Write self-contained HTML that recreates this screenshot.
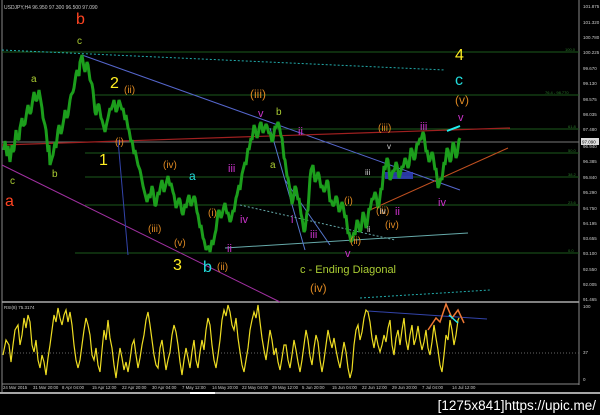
<!DOCTYPE html>
<html><head><meta charset="utf-8"><style>
html,body{margin:0;padding:0;background:#000;width:600px;height:415px;overflow:hidden}
svg{display:block}
text{font-family:"Liberation Sans",sans-serif}
</style></head><body>
<svg width="600" height="415" viewBox="0 0 600 415" xmlns="http://www.w3.org/2000/svg">
<rect width="600" height="415" fill="#000"/>
<line x1="2" y1="0" x2="2" y2="392" stroke="#888" stroke-width="1"/>
<line x1="579" y1="0" x2="579" y2="385" stroke="#888" stroke-width="1"/>
<line x1="2" y1="302" x2="579" y2="302" stroke="#aaa" stroke-width="1.5"/>
<line x1="2" y1="384" x2="579" y2="384" stroke="#888"/>
<line x1="0" y1="393" x2="600" y2="393" stroke="#ddd" stroke-width="1.5"/>
<g stroke="#1d5a1d" stroke-width="1">
<line x1="2" y1="52" x2="579" y2="52"/>
<line x1="95" y1="95" x2="579" y2="95"/>
<line x1="85" y1="129" x2="579" y2="129"/>
<line x1="85" y1="153" x2="579" y2="153"/>
<line x1="85" y1="177" x2="579" y2="177"/>
<line x1="85" y1="205" x2="579" y2="205"/>
<line x1="75" y1="253" x2="579" y2="253"/>
</g>
<line x1="2" y1="142" x2="579" y2="142" stroke="#777"/>
<g fill="#2a7a2a" font-size="4"><text x="565" y="51">100.0</text><text x="545" y="94">76.4 - 98.770</text><text x="568" y="128">61.8</text><text x="568" y="152">50.0</text><text x="568" y="176">38.2</text><text x="568" y="204">23.6</text><text x="568" y="252">0.0</text></g>
<line x1="2" y1="50" x2="445" y2="70" stroke="#2aa" stroke-dasharray="2,2"/>
<line x1="82" y1="55" x2="460" y2="190" stroke="#5566cc"/>
<line x1="2" y1="165" x2="280" y2="302" stroke="#a030a0"/>
<line x1="2" y1="145" x2="510" y2="128" stroke="#a02020" stroke-width="1.2"/>
<line x1="370" y1="210" x2="508" y2="148" stroke="#c05020"/>
<line x1="225" y1="248" x2="468" y2="233" stroke="#6aa"/>
<line x1="270" y1="128" x2="305" y2="250" stroke="#5577cc"/>
<line x1="285" y1="180" x2="330" y2="245" stroke="#5577cc"/>
<line x1="240" y1="205" x2="395" y2="240" stroke="#6aa" stroke-dasharray="2,2"/>
<line x1="360" y1="298" x2="490" y2="290" stroke="#2aa" stroke-dasharray="2,2"/>
<line x1="118" y1="140" x2="128" y2="255" stroke="#3344aa"/>
<rect x="385" y="172" width="28" height="7" fill="#3344cc" opacity="0.8"/>
<polyline fill="none" stroke="#1c9e1c" stroke-width="3" stroke-linejoin="bevel" points="
4,150 5,141 7,156 8,146 10,162 12,145 13,152 14,150 16,130 17,138 19,140 20,128 22,118 23,126 25,124 27,110 28,105 30,114 31,112 33,98 34,92 36,101 37,100 39,90 40,96 42,108 43,118 45,125 46,130 48,152 49,145 50,165 52,158 53,155 55,142 56,148 58,130 59,125 61,134 62,130 64,118 65,110 67,118 68,115 70,100 71,95 73,92 74,88 76,74 77,70 79,76 80,62 82,55 84,68 85,72 87,62 88,65 90,80 92,84 93,90 95,112 96,115 98,104 99,105 101,118 102,120 104,128 105,132 107,122 108,118 110,108 111,110 113,104 114,100 116,112 117,110 119,100 120,103 122,110 123,108 125,120 126,115 128,128 129,130 131,142 132,140 134,154 135,150 137,160 138,165 140,170 141,175 143,186 144,190 146,198 147,202 149,194 150,198 152,186 153,190 155,206 156,205 158,192 159,195 161,184 162,180 164,192 165,188 167,180 168,176 170,186 171,183 173,192 174,195 176,208 177,205 179,198 180,200 182,213 183,215 185,204 186,208 188,198 189,195 191,206 192,203 194,196 195,198 197,212 198,215 200,228 201,225 203,238 204,240 206,250 207,248 209,246 210,252 212,240 213,245 215,234 216,230 218,212 219,210 221,218 222,215 224,206 225,203 227,214 228,212 230,222 231,220 233,210 234,212 236,198 237,195 239,185 240,190 242,174 243,170 245,162 246,165 248,148 249,150 251,138 252,140 254,125 255,128 257,138 258,135 260,124 261,122 263,133 264,130 266,124 267,126 269,134 270,132 272,142 273,140 275,126 276,128 278,122 279,125 281,136 282,138 284,158 285,160 287,176 288,178 290,190 292,204 293,200 295,186 296,188 298,200 299,198 301,214 302,218 304,232 305,230 307,212 308,210 310,178 311,170 313,165 315,182 316,180 318,172 319,175 321,188 322,185 324,192 325,190 327,180 328,182 330,202 331,200 333,206 334,205 336,196 337,198 339,212 340,210 342,202 343,205 345,218 346,215 348,234 349,232 351,242 352,240 354,232 355,235 357,220 358,222 360,232 361,230 363,212 364,215 366,228 367,225 369,208 370,210 372,198 373,200 375,192 376,195 378,208 379,205 381,188 382,190 384,166 385,170 387,158 388,160 390,180 391,178 393,170 394,172 396,162 397,165 399,178 400,175 402,166 403,168 405,158 406,160 408,168 409,165 411,148 412,150 414,160 415,158 417,143 418,145 420,138 421,140 423,132 424,135 426,152 427,150 429,162 430,160 432,152 433,155 435,170 436,168 438,188 439,185 441,178 442,180 444,162 445,165 447,148 448,150 450,162 451,160 453,142 454,145 456,158 457,155 459,140 460,138"/>
<line x1="447" y1="131" x2="460" y2="126" stroke="#2ee" stroke-width="2"/>
<g font-size="16">
<text x="76" y="24" fill="#ff4422">b</text>
<text x="5" y="206" fill="#ff4422">a</text>
<text x="110" y="88" fill="#ffee22">2</text>
<text x="99" y="165" fill="#ffee22">1</text>
<text x="173" y="270" fill="#ffee22">3</text>
<text x="455" y="60" fill="#ffee22">4</text>
<text x="455" y="85" fill="#22dddd">c</text>
<text x="203" y="272" fill="#22dddd">b</text>
<text x="189" y="180" fill="#22dddd" font-size="12">a</text>
</g>
<g font-size="10" fill="#aacc33">
<text x="77" y="44">c</text><text x="31" y="82">a</text><text x="52" y="177">b</text><text x="10" y="184">c</text>
<text x="276" y="115">b</text><text x="270" y="168">a</text>
<text x="300" y="273" font-size="11">c - Ending Diagonal</text>
</g>
<g font-size="10" fill="#dd8822">
<text x="124" y="93">(ii)</text><text x="115" y="145">(i)</text><text x="163" y="168">(iv)</text>
<text x="148" y="232">(iii)</text><text x="174" y="246">(v)</text><text x="208" y="216">(i)</text><text x="217" y="270">(ii)</text>
<text x="250" y="98" font-size="12">(iii)</text><text x="378" y="131">(iii)</text><text x="376" y="214">(iii)</text>
<text x="385" y="228">(iv)</text><text x="344" y="204">(i)</text><text x="350" y="244">(ii)</text>
<text x="310" y="292" font-size="12">(iv)</text><text x="455" y="104" font-size="12">(v)</text>
</g>
<g font-size="11" fill="#cc33cc">
<text x="258" y="117">v</text><text x="298" y="135">ii</text><text x="228" y="172">iii</text><text x="240" y="223">iv</text>
<text x="227" y="252">ii</text><text x="310" y="238">iii</text><text x="345" y="257">v</text><text x="420" y="130">iii</text>
<text x="458" y="121">v</text><text x="395" y="215">ii</text><text x="438" y="206">iv</text><text x="291" y="223">i</text>
</g>
<g font-size="8" fill="#ccc"><text x="387" y="149">v</text><text x="365" y="175">iii</text><text x="380" y="214">iv</text><text x="367" y="232">ii</text></g>
<text x="4" y="9" font-size="5" fill="#ccc">USDJPY,H4  96.950 97.300 96.500 97.090</text>
<g font-size="4.5" fill="#ccc">
<text x="583" y="8">101.875</text><text x="583" y="24">101.320</text><text x="583" y="39">100.780</text><text x="583" y="54">100.225</text>
<text x="583" y="70">99.670</text><text x="583" y="85">99.130</text><text x="583" y="101">98.575</text><text x="583" y="116">98.035</text>
<text x="583" y="131">97.480</text><text x="583" y="148">96.940</text><text x="583" y="163">96.385</text><text x="583" y="179">95.840</text>
<text x="583" y="194">95.290</text><text x="583" y="210">94.750</text><text x="583" y="225">94.195</text><text x="583" y="240">93.655</text>
<text x="583" y="255">93.100</text><text x="583" y="271">92.550</text><text x="583" y="286">92.005</text><text x="583" y="301">91.465</text>
<text x="583" y="308">100</text><text x="583" y="354">37</text><text x="583" y="381">0</text>
</g>
<rect x="581" y="138" width="18" height="7" fill="#ddd"/><text x="582" y="143.5" font-size="4.5" fill="#000">97.090</text>
<text x="4" y="309" font-size="4.5" fill="#ccc">RSI(8) 75.3174</text>
<line x1="2" y1="353" x2="579" y2="353" stroke="#666" stroke-dasharray="1,2"/>
<line x1="368" y1="311" x2="487" y2="319" stroke="#3344aa"/>
<polyline fill="none" stroke="#eedd22" stroke-width="1.2" points="
3,355 6,340 9,345 11,362 13,345 15,330 18,325 20,345 22,335 24,318 26,328 28,315 30,322 32,345 34,352 36,340 38,360 40,368 42,355 44,362 46,375 48,358 50,345 52,330 54,315 56,322 58,308 60,318 62,325 64,315 66,310 68,322 70,312 72,325 74,345 76,360 78,368 80,360 82,345 84,330 86,318 88,325 90,335 92,355 94,360 96,348 98,365 100,372 102,350 104,330 106,340 108,320 110,338 112,348 114,365 116,378 118,362 120,348 122,358 124,370 126,362 128,372 130,360 132,345 134,340 136,355 138,368 140,358 142,345 144,335 146,320 148,312 150,325 152,340 154,355 156,365 158,368 160,348 162,340 164,355 166,370 168,360 170,352 172,335 174,325 176,332 178,345 180,362 182,375 184,360 186,348 188,358 190,368 192,352 194,340 196,360 198,368 200,352 202,340 204,350 206,330 208,318 210,325 212,345 214,360 216,368 218,355 220,340 222,320 224,310 226,316 228,305 230,312 232,325 234,330 236,318 238,338 240,352 242,365 244,372 246,360 248,348 250,330 252,320 254,312 256,318 258,305 260,322 262,338 264,350 266,360 268,345 270,330 272,340 274,355 276,348 278,362 280,370 282,358 284,345 286,345 288,360 290,368 292,355 294,340 296,350 298,362 300,372 302,360 304,345 306,330 308,340 310,356 312,365 314,348 316,335 318,342 320,360 322,372 324,360 326,345 328,330 330,340 332,348 334,338 336,350 338,360 340,368 342,355 344,342 346,352 348,368 350,378 352,370 354,345 356,330 358,325 360,340 362,332 364,318 366,310 368,312 370,322 372,338 374,348 376,335 378,345 380,352 382,345 384,335 386,342 388,328 390,320 392,345 394,355 396,338 398,330 400,345 402,330 404,318 406,340 408,350 410,335 412,325 414,345 416,338 418,326 420,340 422,350 424,342 426,330 428,348 430,355 432,342 434,325 436,338 438,350 440,365 442,372 444,355 446,335 448,340 450,320 452,330 454,345 456,335 458,320 459,318"/>
<polyline fill="none" stroke="#ee7733" stroke-width="1.5" points="428,330 436,318 440,322 446,304 452,318 458,310 464,323"/>
<line x1="449" y1="315" x2="458" y2="323" stroke="#2ee" stroke-width="1.5"/>
<g font-size="4.3" fill="#ccc">
<text x="3" y="389">24 Mar 2015</text><text x="33" y="389">31 Mar 20:00</text><text x="62" y="389">8 Apr 04:00</text>
<text x="92" y="389">15 Apr 12:00</text><text x="122" y="389">22 Apr 20:00</text><text x="152" y="389">30 Apr 04:00</text>
<text x="182" y="389">7 May 12:00</text><text x="212" y="389">14 May 20:00</text><text x="242" y="389">22 May 04:00</text>
<text x="272" y="389">29 May 12:00</text><text x="302" y="389">5 Jun 20:00</text><text x="332" y="389">15 Jun 04:00</text>
<text x="362" y="389">22 Jun 12:00</text><text x="392" y="389">29 Jun 20:00</text><text x="422" y="389">7 Jul 04:00</text>
<text x="452" y="389">14 Jul 12:00</text>
</g>
<rect x="190" y="392" width="25" height="2" fill="#fff"/>
<text x="596" y="410" font-size="13.5" fill="#fff" text-anchor="end" font-family="Liberation Mono,monospace">[1275x841]https://upic.me/</text>
</svg>
</body></html>
